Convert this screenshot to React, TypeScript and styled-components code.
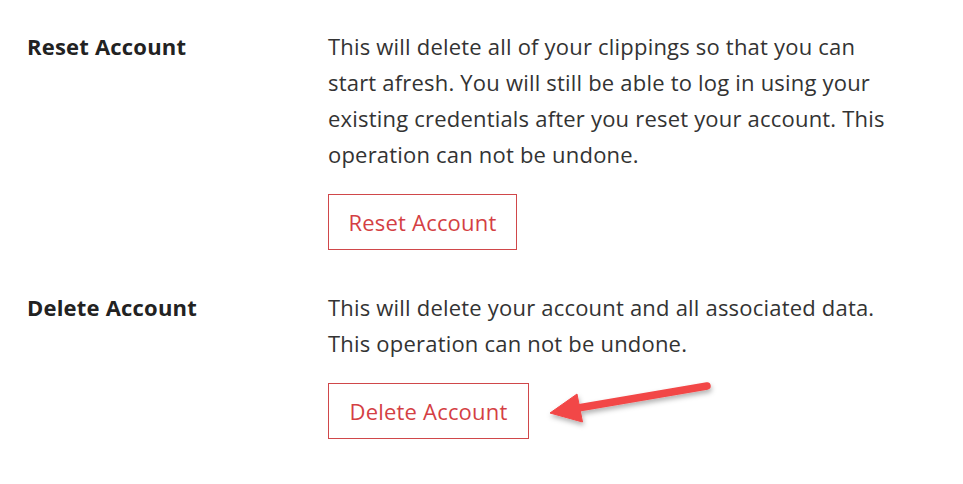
import React from "react";
import styled, { createGlobalStyle } from "styled-components";

const Global = createGlobalStyle`
  html, body { margin: 0; padding: 0; background: #ffffff; }
  body { font-family: "Open Sans", "Noto Sans", sans-serif; color: #333333; }
`;

const Page = styled.div`
  position: relative;
  width: 963px;
  height: 484px;
  padding: 28px 0 0 27px;
  box-sizing: border-box;
`;

const Section = styled.section`
  display: grid;
  grid-template-columns: 301px 568px;
  margin-bottom: 39px;
`;

const Label = styled.h3`
  margin: 0;
  font-size: 22px;
  line-height: 36px;
  font-weight: 700;
  letter-spacing: 0.2px;
  color: #222222;
`;

const Body = styled.div`
  display: flex;
  flex-direction: column;
  align-items: flex-start;
`;

const Description = styled.p`
  margin: 0 0 22px;
  font-size: 22px;
  line-height: 36px;
  letter-spacing: 0.2px;
  color: #333333;
`;

const DangerButton = styled.button<{ $w: number }>`
  width: ${(p) => p.$w}px;
  height: 56px;
  box-sizing: border-box;
  border: 1px solid #d0474a;
  background: #ffffff;
  color: #d43f44;
  font-family: inherit;
  font-size: 22px;
  letter-spacing: 0.2px;
  padding: 0;
  cursor: pointer;
`;

const Overlay = styled.svg`
  position: absolute;
  left: 0;
  top: 0;
  pointer-events: none;
`;

export default function App() {
  return (
    <>
      <Global />
      <Page>
        <Section>
          <Label>Reset Account</Label>
          <Body>
            <Description>
              This will delete all of your clippings so that you can start afresh. You will still be able to log in
              using your existing credentials after you reset your account. This operation can not be undone.
            </Description>
            <DangerButton $w={189}>Reset Account</DangerButton>
          </Body>
        </Section>
        <Section>
          <Label>Delete Account</Label>
          <Body>
            <Description>
              This will delete your account and all associated data. This operation can not be undone.
            </Description>
            <DangerButton $w={201}>Delete Account</DangerButton>
          </Body>
        </Section>
        <Overlay width="963" height="484" viewBox="0 0 963 484">
          <defs>
            <filter id="shadow" x="-20%" y="-50%" width="140%" height="200%">
              <feDropShadow dx="1" dy="3" stdDeviation="2.5" floodColor="#000" floodOpacity="0.3" />
            </filter>
          </defs>
          <g filter="url(#shadow)" fill="#f24747" stroke="#f24747">
            <line x1="578" y1="408" x2="707" y2="386" strokeWidth="7.5" strokeLinecap="round" />
            <polygon points="550,413 577,394 582.5,422" strokeWidth="1" strokeLinejoin="round" />
          </g>
        </Overlay>
      </Page>
    </>
  );
}
